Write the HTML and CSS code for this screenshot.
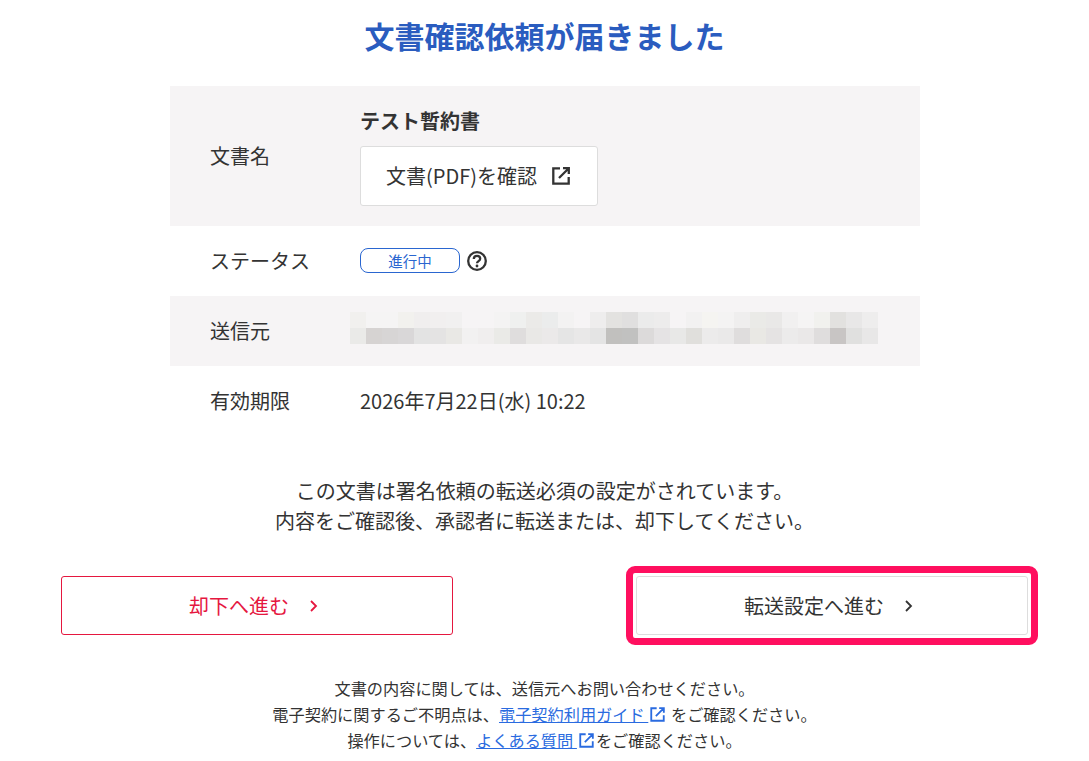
FILE: index.html
```html
<!DOCTYPE html>
<html lang="ja">
<head>
    <meta charset="UTF-8">
    <title>文書確認依頼</title>
    <link rel="stylesheet" href="styles.css">
</head>
<body>
    <div class="container">
        <h1 class="title">文書確認依頼が届きました</h1>
        <div class="info">
            <div class="row row-doc shaded">
                <div class="label">文書名</div>
                <div class="value">
                    <div class="doc-name">テスト暫約書</div>
                    <a class="doc-button">文書(PDF)を確認
                        <svg class="icon-open" viewBox="0 0 18 18"><path d="M8 1.300H1.300v15.400h15.400V10M11 1.200h5.800V7M16.800 1.200 7 11" fill="none" stroke="currentColor" stroke-width="2.300"/></svg>
                    </a>
                </div>
            </div>
            <div class="row">
                <div class="label">ステータス</div>
                <div class="value status">
                    <span class="badge">進行中</span>
                    <svg class="icon-help" viewBox="0 0 20 20">
                        <circle cx="10" cy="10" r="8.800" fill="none" stroke="currentColor" stroke-width="2.300"/>
                        <path d="M6.800 8C6.800 6 8.300 4.800 10 4.800s3.200 1.100 3.200 2.900c0 2.400-3.200 2.400-3.200 4.600" fill="none" stroke="currentColor" stroke-width="2.300"/>
                        <circle cx="10" cy="15" r="1.400" fill="currentColor"/>
                    </svg>
                </div>
            </div>
            <div class="row shaded">
                <div class="label">送信元</div>
                <div class="value">
                    <div class="blur">
                        <span style="background:#f1f0ee"></span><span style="background:#f5f4f4"></span><span style="background:#f5f4f4"></span><span style="background:#f2f1ee"></span><span style="background:#f0eeee"></span><span style="background:#f1efef"></span><span style="background:#f1f0f0"></span><span style="background:#f6f4f5"></span><span style="background:#f6f4f5"></span><span style="background:#f4f3f3"></span><span style="background:#eff0ef"></span><span style="background:#ebeae8"></span><span style="background:#ebecec"></span><span style="background:#f3f2f2"></span><span style="background:#f6f4f5"></span><span style="background:#eeeded"></span><span style="background:#e3e2e0"></span><span style="background:#e0dfdf"></span><span style="background:#ebebeb"></span><span style="background:#edecec"></span><span style="background:#f6f4f5"></span><span style="background:#f2f1f1"></span><span style="background:#f5f4f1"></span><span style="background:#f4f3f3"></span><span style="background:#efeeee"></span><span style="background:#eaeae7"></span><span style="background:#e9e8e7"></span><span style="background:#f1f0f0"></span><span style="background:#f5f4f4"></span><span style="background:#f1f1ee"></span><span style="background:#e2e1df"></span><span style="background:#e8e7e7"></span><span style="background:#eeeded"></span>
                        <span style="background:#eaeae8"></span><span style="background:#d6d3d2"></span><span style="background:#d7d5d5"></span><span style="background:#d9d7d8"></span><span style="background:#e3e3e3"></span><span style="background:#e4e3e3"></span><span style="background:#e9e8e5"></span><span style="background:#f2f1f1"></span><span style="background:#f0eeee"></span><span style="background:#eaeae7"></span><span style="background:#dfdddd"></span><span style="background:#e9e8e6"></span><span style="background:#ebe9e9"></span><span style="background:#e5e5e5"></span><span style="background:#e9e8e8"></span><span style="background:#e4e4e4"></span><span style="background:#c1c0be"></span><span style="background:#c1c1c0"></span><span style="background:#dcdada"></span><span style="background:#e5e3e4"></span><span style="background:#e8e8e7"></span><span style="background:#e0dfdc"></span><span style="background:#ecebeb"></span><span style="background:#eae9e9"></span><span style="background:#dfdddd"></span><span style="background:#e9e8e4"></span><span style="background:#e5e3e3"></span><span style="background:#ecebeb"></span><span style="background:#eae8e8"></span><span style="background:#dfdddd"></span><span style="background:#c8c5c4"></span><span style="background:#e0e0df"></span><span style="background:#e8e7e7"></span>
                    </div>
                </div>
            </div>
            <div class="row">
                <div class="label">有効期限</div>
                <div class="value">2026年7月22日(水) 10:22</div>
            </div>
        </div>
        <p class="message">この文書は署名依頼の転送必須の設定がされています。<br>内容をご確認後、承認者に転送または、却下してください。</p>
        <div class="actions">
            <a class="action reject">却下へ進む
                <svg class="chevron" viewBox="0 0 10 14"><path d="M2 2l5 5-5 5" fill="none" stroke="currentColor" stroke-width="1.800"/></svg>
            </a>
            <a class="action forward">転送設定へ進む
                <svg class="chevron" viewBox="0 0 10 14"><path d="M2 2l5 5-5 5" fill="none" stroke="currentColor" stroke-width="1.800"/></svg>
                <span class="highlight"></span>
            </a>
        </div>
        <div class="notes">
            <p>文書の内容に関しては、送信元へお問い合わせください。</p>
            <p>電子契約に関するご不明点は、<a class="link">電子契約利用ガイド </a><svg class="icon-link" viewBox="0 0 18 18"><path d="M8 1.500H1.500v15h15V10M11 1.400h5.600V7M16.600 1.400 7 11" fill="none" stroke="currentColor" stroke-width="2.200"/></svg> をご確認ください。</p>
            <p>操作については、<a class="link">よくある質問 </a><svg class="icon-link" viewBox="0 0 18 18"><path d="M8 1.500H1.500v15h15V10M11 1.400h5.600V7M16.600 1.400 7 11" fill="none" stroke="currentColor" stroke-width="2.200"/></svg>をご確認ください。</p>
        </div>
    </div>
</body>
</html>
```

FILE: styles.css
```css
body {
    font-family: "Noto Sans CJK JP", "Noto Sans", sans-serif;
    color: #333;
    background-color: #fff;
    margin: 0;
    padding: 0;
}
.container {
    width: 967px;
    margin: 0 auto;
}
.title {
    margin: 0;
    height: 86px;
    padding-top: 13px;
    box-sizing: border-box;
    font-size: 30px;
    line-height: 44px;
    font-weight: 700;
    color: #2a5cbf;
    text-align: center;
}
.info {
    width: 750px;
    margin-left: 109px;
}
.row {
    display: flex;
    align-items: center;
    min-height: 70px;
    font-size: 20px;
    line-height: 30px;
}
.row-doc {
    height: 140px;
}
.shaded {
    background-color: #f6f4f5;
}
.label {
    width: 150px;
    padding-left: 40px;
    flex-shrink: 0;
}
.doc-name {
    font-weight: 700;
    margin-bottom: 10px;
}
.doc-button {
    display: flex;
    align-items: center;
    justify-content: center;
    gap: 15px;
    width: 238px;
    height: 60px;
    box-sizing: border-box;
    background-color: #fff;
    border: 1px solid #ddd;
    border-radius: 3px;
}
.icon-open {
    width: 18px;
    height: 18px;
    margin-right: 2px;
}
.status {
    display: flex;
    align-items: center;
    gap: 7px;
    margin-bottom: 1px;
}
.badge {
    width: 100px;
    height: 25px;
    box-sizing: border-box;
    border: 1px solid #2a66d0;
    border-radius: 8px;
    color: #2a66d0;
    font-size: 14.500px;
    line-height: 23px;
    text-align: center;
}
.icon-help {
    width: 20px;
    height: 20px;
}
.blur {
    display: grid;
    grid-template-columns: repeat(33, 16px);
    grid-auto-rows: 16px;
    margin-left: -10px;
    margin-bottom: 6px;
}
.message {
    margin: 40px 0 0;
    font-size: 20px;
    line-height: 30px;
    text-align: center;
}
.actions {
    display: flex;
    justify-content: space-between;
    margin-top: 40px;
}
.action {
    position: relative;
    display: flex;
    align-items: center;
    justify-content: center;
    gap: 20px;
    width: 392px;
    height: 59px;
    box-sizing: border-box;
    font-size: 20px;
    background-color: #fff;
    border-radius: 3px;
}
.reject {
    color: #e5173f;
    border: 1px solid #e5173f;
}
.forward {
    border: 1px solid #ddd;
}
.chevron {
    width: 10px;
    height: 14px;
    margin-right: 6px;
}
.highlight {
    position: absolute;
    top: -11px;
    left: -11px;
    right: -11px;
    bottom: -11px;
    border: 7px solid #ff0f5f;
    border-radius: 9px;
}
.notes {
    margin-top: 40px;
    font-size: 16.200px;
    line-height: 26px;
    text-align: center;
}
.notes p {
    margin: 0;
}
.link {
    color: #2a6be0;
    text-decoration: underline;
}
.icon-link {
    width: 15px;
    height: 15px;
    margin: 0 2px;
    color: #2a6be0;
    vertical-align: -1px;
}
```
